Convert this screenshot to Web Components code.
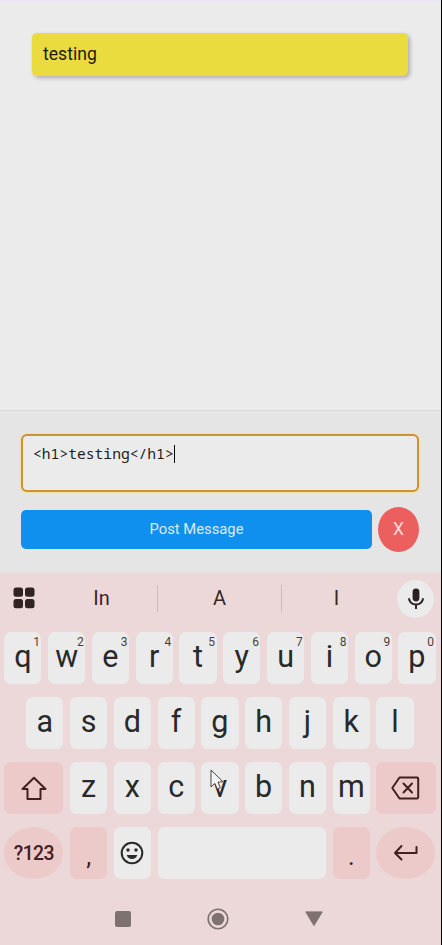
<!DOCTYPE html>
<html lang="en">
<head>
<meta charset="utf-8">
<title>Post Message</title>
<style>
html,body{margin:0;height:100%;background:#000;overflow:hidden}
body{font-family:Roboto,"Noto Sans",sans-serif}
</style>
</head>
<body>
<phone-screen></phone-screen>
<script>
function define(name, html) {
  const template = document.createElement('template');
  template.innerHTML = html;
  customElements.define(name, class extends HTMLElement {
    constructor() {
      super();
      this.attachShadow({ mode: 'open' }).append(template.content.cloneNode(true));
    }
  });
}

define('message-card', `<style>
:host{display:block;box-sizing:border-box;height:43px;padding:0 11px;border-radius:5px;background:#eadc3e;color:#1d1b0c;font-size:17.6px;line-height:43px;box-shadow:2px 2px 4px rgba(0,0,0,.27)}
</style><slot></slot>`);

define('message-form', `<style>
:host{display:flex;flex-direction:column;box-sizing:border-box;height:163px;padding:23px 22px 0 21px;background:#e5e5e5;border-top:1px solid #d9d9d9}
.field{display:flex;align-items:flex-start;box-sizing:border-box;height:58px;padding:9px 10px 0;border:2px solid #cb9430;border-radius:6px;background:#ebebeb;box-shadow:0 0 1px 1px #f5dda3;font:14.67px/18px "Droid Sans Mono","Noto Sans Mono","DejaVu Sans Mono",monospace;color:#1c1c1c}
.field span{margin-top:-1px}
.caret{width:1px;height:18px;background:#000}
.actions{display:flex;align-items:center;gap:6px;margin-top:15px;height:45px}
.post{flex:1;height:39px;border-radius:5px;background:#1090ee;color:#d8ebf8;text-align:center;font-size:14.8px;line-height:39px}
.clear{width:41px;height:45px;border-radius:50%;background:#eb5f5e;color:#f8dddd;text-align:center;font-size:17.5px;line-height:45px}
</style>
<div class="field"><span>&lt;h1&gt;testing&lt;/h1&gt;</span><i class="caret"></i></div>
<div class="actions"><div class="post">Post Message</div><div class="clear">X</div></div>`);

define('suggestion-bar', `<style>
:host{display:grid;grid-template-columns:46px 111px 125px 109px 50px;align-items:center;height:53px;font-size:20px;color:#3b2528;text-align:center}
svg{display:block}
.apps{margin-left:13px;margin-top:-2px}
span{line-height:27px;margin-top:-1px}
.mid{border:solid #cfb9bb;border-width:0 1px}
.mic{display:grid;place-items:center;width:37px;height:38px;border-radius:50%;background:#ebebeb;margin:-1px 0 0 6px}
</style>
<svg class="apps" width="22" height="22" fill="#302322"><rect x=".5" y=".5" width="9.5" height="9.3" rx="2.5"/><rect x="12" y=".5" width="9.5" height="9.3" rx="2.5"/><rect x=".5" y="12" width="9.5" height="9.3" rx="2.5"/><rect x="12" y="12" width="9.5" height="9.3" rx="2.5"/></svg>
<span>In</span><span class="mid">A</span><span>I</span>
<div class="mic"><svg width="18" height="22" viewBox="0 0 18 22"><rect x="5.6" y=".5" width="6.8" height="13" rx="3.4" fill="#282222"/><path d="M2 10.2a7 6.4 0 0 0 14 0M9 16.5v4.5" fill="none" stroke="#282222" stroke-width="2"/></svg></div>`);

define('key-row', `<style>
:host{display:flex;justify-content:center;gap:6.6px;height:52px;margin-bottom:13.1px;padding:0 5.2px 0 4px}
</style><slot></slot>`);

define('key-cap', `<style>
:host{display:block;position:relative;box-sizing:border-box;flex:0 0 37.2px;height:100%;border-radius:6.5px;background:#ebebeb;color:#282929;text-align:center;font-size:30.5px;line-height:50px}
:host([tone=soft]){background:#ebcac9;color:#40211f}
:host([size=wide]){flex-basis:59.1px}
:host([size=space]){flex-basis:168.4px}
:host([shape=round]){border-radius:30px/50%}
:host([kind=label]){font-size:19.4px;font-weight:500;line-height:53px;letter-spacing:-.6px}
:host([kind=punct]){font-size:25px;line-height:59px}
:host([kind=icon]){display:grid;place-items:center;line-height:0}
::slotted(sup){position:absolute;right:1.5px;top:4px;font-size:12px;line-height:12px;color:#493e3e}
::slotted(svg){display:block;fill:none;stroke:currentColor;stroke-width:2;stroke-linejoin:round;stroke-linecap:round}
</style><slot></slot>`);

define('nav-bar', `<style>
:host{display:grid;grid-template-columns:repeat(3,1fr);width:287px;margin:27.5px 0 0 75px;height:24px;place-items:center;color:#7e7270}
svg{display:block}
</style>
<svg width="16" height="16"><rect width="16" height="16" rx="2" fill="currentColor"/></svg>
<svg width="22" height="22"><circle cx="11" cy="11" r="9.8" fill="none" stroke="currentColor" stroke-width="1.6"/><circle cx="11" cy="11" r="6.3" fill="currentColor"/></svg>
<svg width="18" height="16"><path d="M.8 .9h16.4L9 14.6Z" fill="currentColor" stroke="currentColor" stroke-linejoin="round"/></svg>`);

define('mouse-pointer', `<style>
:host{position:absolute;left:210px;top:769px}
svg{display:block}
</style><svg width="17" height="25" viewBox="0 0 17 25"><path d="M1 1v17l3.8-3.6L7.3 20l3-1.3L8 13.1l5-.4Z" fill="#f4f4f4" stroke="#444" stroke-width="1"/></svg>`);

const caps = row => [...row].map(c => `<key-cap>${c}</key-cap>`).join('');
const digits = '1234567890';

define('soft-keyboard', `<style>
:host{display:block;height:372.5px;background:#ecd8d8}
.keys{padding-top:6.6px}
</style>
<suggestion-bar></suggestion-bar>
<div class="keys">
<key-row>${[...'qwertyuiop'].map((c, i) => `<key-cap>${c}<sup>${digits[i]}</sup></key-cap>`).join('')}</key-row>
<key-row>${caps('asdfghjkl')}</key-row>
<key-row>
<key-cap tone="soft" size="wide" kind="icon"><svg width="26" height="25" viewBox="0 0 26 25"><path d="M13 1.7 1.5 13h5v10h13V13h5Z"/></svg></key-cap>${caps('zxcvbnm')}<key-cap tone="soft" size="wide" kind="icon"><svg width="29" height="24" viewBox="0 0 29 24"><path d="M8.5 1.5H26q1.2 0 1.2 1.2v18.6q0 1.2-1.2 1.2H8.5L1.3 12ZM12.5 7.5l8.5 9M21 7.5l-8.5 9"/></svg></key-cap></key-row>
<key-row>
<key-cap tone="soft" size="wide" shape="round" kind="label">?123</key-cap><key-cap tone="soft" kind="punct">,</key-cap><key-cap kind="icon"><svg width="24" height="24" viewBox="0 0 24 24"><circle cx="12" cy="12" r="10.3"/><circle cx="8" cy="9" r="1.7" fill="currentColor" stroke="none"/><circle cx="16" cy="9" r="1.7" fill="currentColor" stroke="none"/><path d="M6.7 13.9h10.6q-1.3 4-5.3 4t-5.3-4Z" fill="currentColor" stroke="none"/></svg></key-cap><key-cap size="space"></key-cap><key-cap tone="soft" kind="punct">.</key-cap><key-cap tone="soft" size="wide" shape="round" kind="icon"><svg width="26" height="18" viewBox="0 0 26 18"><path d="M8.5 2 2 9l6.5 6.5M2 9h21.5V3"/></svg></key-cap></key-row>
</div>
<nav-bar></nav-bar>`);

define('phone-screen', `<style>
:host{display:flex;flex-direction:column;position:relative;width:441px;height:945px;background:#ebebeb;overflow:hidden}
.messages{box-sizing:border-box;height:409.5px;padding:31px 33px 0 32px;border-top:2px solid #ece5f7}
</style>
<div class="messages"><message-card>testing</message-card></div>
<message-form></message-form>
<soft-keyboard></soft-keyboard>
<mouse-pointer></mouse-pointer>`);
</script>
</body>
</html>
